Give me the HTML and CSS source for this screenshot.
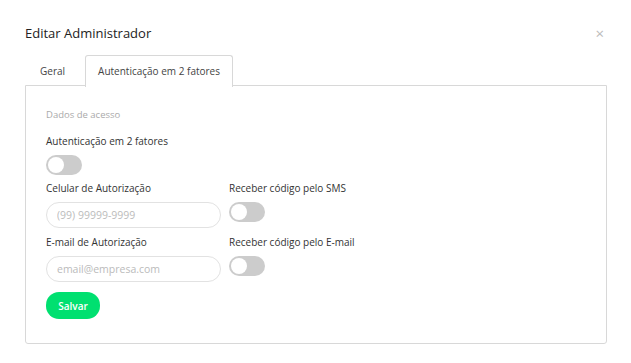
FILE: index.html
```html
<!DOCTYPE html>
<html>
<head>
    <title>Editar Administrador</title>
    <link rel="stylesheet" href="styles.css">
</head>
<body>
    <div class="modal">
        <div class="modal-header">
            <h1>Editar Administrador</h1>
            <span class="close">&times;</span>
        </div>
        <div class="tabs">
            <div class="tab">Geral</div>
            <div class="tab active">Autenticação em 2 fatores</div>
        </div>
        <div class="panel">
            <div class="section-title">Dados de acesso</div>
            <label class="label">Autenticação em 2 fatores</label>
            <span class="switch"></span>
            <div class="row">
                <div class="col">
                    <label class="label">Celular de Autorização</label>
                    <input type="text" placeholder="(99) 99999-9999">
                </div>
                <div class="col">
                    <label class="label">Receber código pelo SMS</label>
                    <span class="switch"></span>
                </div>
            </div>
            <div class="row">
                <div class="col">
                    <label class="label">E-mail de Autorização</label>
                    <input type="text" placeholder="email@empresa.com">
                </div>
                <div class="col">
                    <label class="label">Receber código pelo E-mail</label>
                    <span class="switch"></span>
                </div>
            </div>
            <button type="button" class="save">Salvar</button>
        </div>
    </div>
</body>
</html>
```

FILE: styles.css
```css
body { margin: 0; background: #fff; font-family: "Open Sans", sans-serif; color: #333; }
.modal { padding: 22px 24px 0 25px; }
.modal-header { display: flex; justify-content: space-between; align-items: center; height: 22px; }
.modal-header h1 { margin: 0; font-size: 13px; font-weight: 400; color: #222; }
.close { color: #bbb; font-size: 15px; margin-right: 3px; }
.tabs { display: flex; gap: 6px; margin-top: 11px; height: 30px; }
.tab { font-size: 10px; padding: 0 12px; line-height: 31px; color: #444; border: 1px solid transparent; border-bottom: none; border-radius: 3px 3px 0 0; }
.tab:first-child { padding: 0 13px 0 14px; }
.tab.active { border-color: #d8d8d8; background: #fff; height: 31px; }
.panel { border: 1px solid #d8d8d8; border-radius: 0 0 3px 3px; padding: 22px 20px 24px; }
.section-title { font-size: 9.5px; color: #aaa; margin-bottom: 13px; }
.label { display: block; font-size: 10px; color: #333; margin-bottom: 7px; }
.switch { display: block; width: 36px; height: 20px; border-radius: 10px; background: #ccc; position: relative; margin-bottom: 6px; }
.switch::after { content: ""; position: absolute; left: 2px; top: 2px; width: 16px; height: 16px; border-radius: 50%; background: #fff; }
.row { display: grid; grid-template-columns: 175px auto; column-gap: 8px; margin-bottom: 7px; }
input { display: block; box-sizing: border-box; width: 175px; height: 26px; border: 1px solid #e2e2e2; border-radius: 13px; padding: 0 10px; font-family: inherit; font-size: 10.5px; outline: none; }
input::placeholder { color: #bbb; }
.save { margin-top: 3px; width: 54px; height: 27px; border: none; border-radius: 13px; background: #00e070; color: #fff; font-family: inherit; font-size: 10px; font-weight: 600; }
```
